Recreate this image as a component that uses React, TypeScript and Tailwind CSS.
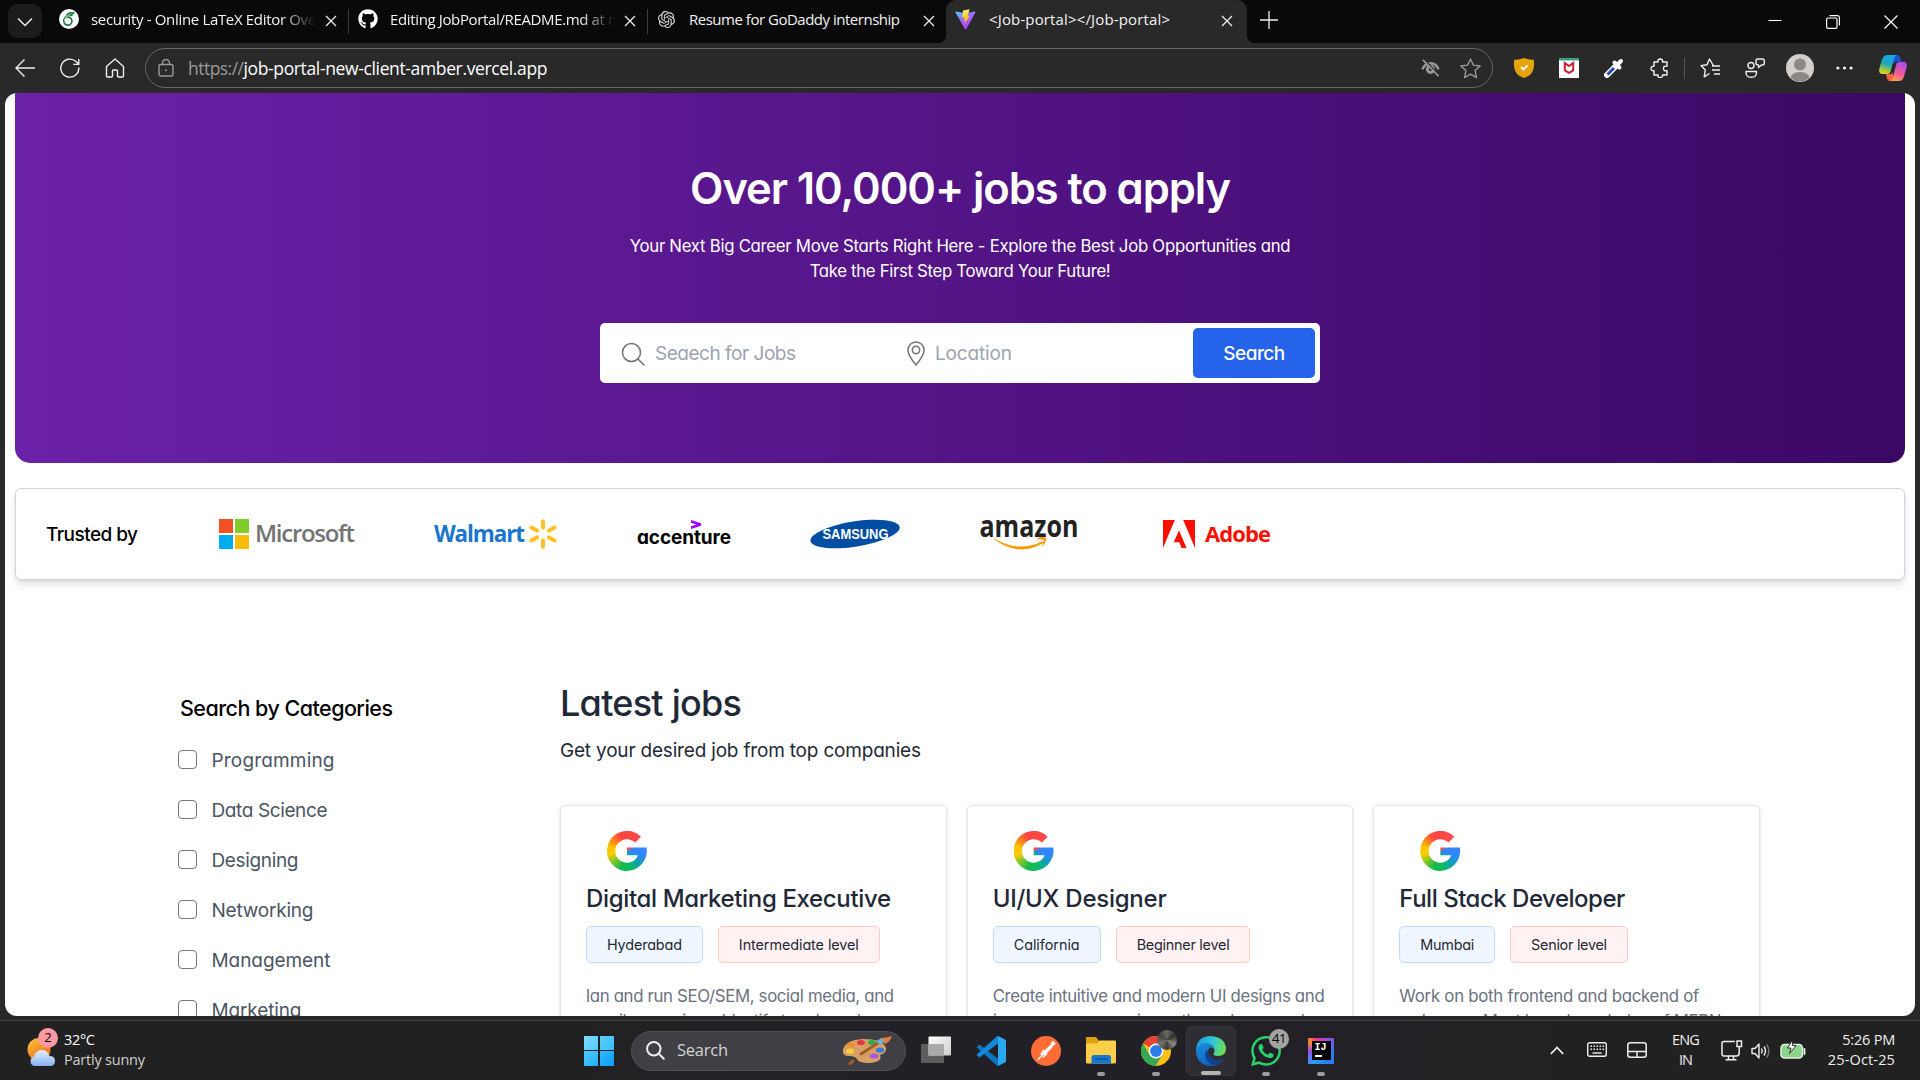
import { useLayoutEffect, useRef } from "react";
import type { ReactNode } from "react";
import { SiOpenai, SiOverleaf, SiWhatsapp } from "react-icons/si";
import { FaGithub } from "react-icons/fa";

/** Single-line text whose tracking is adjusted so that it spans `w` pixels. */
function Fit({ w, children, className = "" }: { w: number; children: string; className?: string }) {
  const ref = useRef<HTMLSpanElement>(null);
  useLayoutEffect(() => {
    const el = ref.current;
    if (!el) return;
    el.style.letterSpacing = "0px";
    const natural = el.getBoundingClientRect().width;
    el.style.letterSpacing = `${(w - natural) / Math.max(1, children.length - 1)}px`;
  }, [w, children]);
  return (
    <span ref={ref} className={`inline-block shrink-0 whitespace-pre ${className}`}>
      {children}
    </span>
  );
}

function Cross({ className = "" }: { className?: string }) {
  return (
    <svg viewBox="0 0 12 12" className={`size-[12px] shrink-0 ${className}`} stroke="#eee" strokeWidth="1.3" fill="none">
      <path d="M1 1L11 11M11 1L1 11" />
    </svg>
  );
}

function ViteLogo() {
  return (
    <svg viewBox="0 0 32 32" className="size-[21px] shrink-0">
      <defs>
        <linearGradient id="va" x1="0" y1="0" x2="0.6" y2="1">
          <stop offset="0" stopColor="#41d1ff" />
          <stop offset="0.5" stopColor="#9a6bff" />
          <stop offset="1" stopColor="#bd34fe" />
        </linearGradient>
        <linearGradient id="vb" x1="0.4" y1="0" x2="0.6" y2="1">
          <stop offset="0" stopColor="#ffea83" />
          <stop offset="0.3" stopColor="#ffdd35" />
          <stop offset="1" stopColor="#ffa800" />
        </linearGradient>
      </defs>
      <path fill="url(#va)" d="M31 5.6L17.2 30.5a1.2 1.2 0 0 1-2.1 0L1 5.6a1.2 1.2 0 0 1 1.3-1.7L16 6.3l13.7-2.4A1.2 1.2 0 0 1 31 5.6z" />
      <path fill="url(#vb)" d="M22.3.3L12.1 2.3l-.8 11.2 3.4-.6-.9 5.1 2.3-.6-1.5 6.4 7.6-13-3.3.7z" />
    </svg>
  );
}

function Tab({ icon, title, w, cut }: { icon: ReactNode; title: string; w: number; cut?: boolean }) {
  return (
    <div className="flex h-full w-[298px] items-center pb-[4px] pl-[8px]">
      <div className="flex w-[21px] items-center justify-center pb-px">{icon}</div>
      <div
        className={
          cut
            ? "ml-[12px] w-[225px] overflow-hidden pb-px [mask-image:linear-gradient(to_right,black_190px,transparent_225px)]"
            : "ml-[12px] w-[225px] overflow-hidden pb-px"
        }
      >
        <Fit w={w}>{title}</Fit>
      </div>
      <Cross className="ml-[9px] mt-[3px]" />
    </div>
  );
}

function TabStrip() {
  return (
    <div className="flex h-[43px] items-start bg-[#090909] text-[15px] text-[#f2f2f2]">
      <div className="ml-[8px] mr-[8px] mt-[4px] flex h-[34px] w-[34px] items-center justify-center rounded-[9px] bg-[#1c1c1c]">
        <svg viewBox="0 0 16 10" className="mt-[2px] w-[16px]" fill="none" stroke="#eee" strokeWidth="1.5">
          <path d="M1 1.5L8 8.5L15 1.5" />
        </svg>
      </div>
      <Tab
        cut
        w={231}
        title="security - Online LaTeX Editor Over"
        icon={
          <div className="flex size-[20px] items-center justify-center rounded-full bg-white">
            <SiOverleaf className="size-[14px] text-[#177a3e]" />
          </div>
        }
      />
      <div className="mt-[9px] h-[25px] w-px bg-[#3d3d3d]" />
      <Tab cut w={232} title="Editing JobPortal/README.md at m" icon={<FaGithub className="size-[20px] text-white" />} />
      <div className="mt-[9px] h-[25px] w-px bg-[#3d3d3d]" />
      <Tab w={211} title="Resume for GoDaddy internship" icon={<SiOpenai className="size-[17px] text-[#ddd]" />} />
      <div className="relative flex h-full w-[301px] items-center rounded-t-[10px] bg-[#292929] pb-[4px] pl-[9px] before:absolute before:-left-[8px] before:bottom-0 before:size-[8px] before:bg-[radial-gradient(circle_at_0_0,transparent_8px,#292929_8.5px)] after:absolute after:-right-[8px] after:bottom-0 after:size-[8px] after:bg-[radial-gradient(circle_at_100%_0,transparent_8px,#292929_8.5px)]">
        <ViteLogo />
        <div className="ml-[13px] w-[232px] pb-px">
          <Fit w={181}>{"<Job-portal></Job-portal>"}</Fit>
        </div>
        <Cross className="mt-[3px]" />
      </div>
      <svg viewBox="0 0 18 18" className="ml-[13px] mt-[11px] size-[18px]" stroke="#eee" strokeWidth="1.3">
        <path d="M9 0V18M0 9H18" />
      </svg>
      <div className="ml-auto mr-[22px] flex h-full items-center gap-[44px]">
        <svg viewBox="0 0 14 14" className="mt-[1px] size-[14px]" stroke="#fff" strokeWidth="1.1">
          <path d="M0.5 5.5H13.5" />
        </svg>
        <svg viewBox="0 0 14 14" className="size-[14px]" fill="none" stroke="#fff" strokeWidth="1.2">
          <rect x="0.6" y="3" width="10.4" height="10.4" rx="1.5" />
          <path d="M3.5 .7H11.5A2 2 0 0 1 13.4 2.6V10.6" />
        </svg>
        <svg viewBox="0 0 14 14" className="size-[14px]" stroke="#fff" strokeWidth="1.2">
          <path d="M.5.5L13.5 13.5M13.5.5L.5 13.5" />
        </svg>
      </div>
    </div>
  );
}

function CopilotLogo() {
  return (
    <svg viewBox="0 0 28 28" className="size-[28px]">
      <defs>
        <linearGradient id="cpa" x1="0.5" y1="0" x2="0.2" y2="1">
          <stop offset="0" stopColor="#12a5ea" />
          <stop offset="0.45" stopColor="#22a8b8" />
          <stop offset="0.75" stopColor="#8fc94a" />
          <stop offset="1" stopColor="#f5cf1b" />
        </linearGradient>
        <linearGradient id="cpb" x1="0.6" y1="0" x2="0.3" y2="1">
          <stop offset="0" stopColor="#a84cf0" />
          <stop offset="0.55" stopColor="#f0569a" />
          <stop offset="1" stopColor="#fba04f" />
        </linearGradient>
      </defs>
      <path fill="#1b52d6" d="M13 1H18Q20.5 1 21.3 4L22 7.5H18Q15.5 7.5 14.5 10Z" />
      <path fill="#f2603d" d="M7 20H11.5Q13 20 13.5 18L15 26Q14.5 27 12 27H10.5Q8.5 27 8 24.5Z" />
      <path fill="url(#cpa)" d="M8.5 1H18Q16 1.5 15.3 4L11.5 17.5Q10.8 20 8 20H4Q-1 20 .5 14L3 5.5Q4.5 1 8.5 1Z" />
      <path fill="url(#cpb)" d="M20 27H11Q13 26.5 13.7 24L17.3 10.5Q18 7.8 21 7.8H24.3Q29 8 27.6 13.5L25 22.5Q23.8 27 20 27Z" />
    </svg>
  );
}

function Toolbar() {
  return (
    <div className="flex h-[50px] items-center bg-[#292929] text-[#eee]">
      <svg viewBox="0 0 20 20" className="ml-[15px] size-[20px]" fill="none" stroke="currentColor" strokeWidth="1.4">
        <path d="M20 10H1M9.500 1.500L1 10L9.500 18.500" />
      </svg>
      <svg viewBox="0 0 20 20" className="ml-[25px] size-[20px]" fill="none" stroke="currentColor" strokeWidth="1.4">
        <path d="M18.800 9.500A9 9 0 1 1 16 3.600L18.500 6M18.800 1V6.400H13.300" />
      </svg>
      <svg viewBox="0 0 20 20" className="ml-[25px] size-[20px]" fill="none" stroke="currentColor" strokeWidth="1.4" strokeLinejoin="round">
        <path d="M1.500 8.500L10 1L18.500 8.500V18Q18.500 19 17.500 19H13.500Q12.500 19 12.500 18V13Q12.500 12 11.500 12H8.500Q7.500 12 7.500 13V18Q7.500 19 6.500 19H2.500Q1.500 19 1.500 18Z" />
      </svg>
      <div className="ml-[20px] flex h-[40px] w-[1348px] items-center rounded-full border border-[#686868] text-[#999]">
        <svg viewBox="0 0 16 18" className="ml-[12px] h-[18px] w-[16px]" fill="none" stroke="currentColor" strokeWidth="1.4">
          <rect x="1" y="5.500" width="14" height="11.500" rx="2" />
          <path d="M4.500 5.500V4A3.500 3.500 0 0 1 11.500 4V5.500" />
          <circle cx="8" cy="11.300" r="1" fill="currentColor" stroke="none" />
        </svg>
        <div className="ml-[14px] flex text-[17.500px] leading-[38px]">
          <Fit w={56} className="pb-[1px] text-[#9a9a9a]">https://</Fit>
          <Fit w={304} className="pb-[1px] text-white">job-portal-new-client-amber.vercel.app</Fit>
        </div>
        <svg viewBox="0 0 20 18" className="ml-auto mr-[20px] h-[18px] w-[19px]" fill="none" stroke="currentColor">
          <path strokeWidth="2.600" d="M1.500 10.500Q4 4 10 4Q16 4 18.500 10.500" />
          <circle cx="10" cy="10.300" r="3.400" strokeWidth="3" />
          <path d="M3 0L19.500 17" stroke="#292929" strokeWidth="2" />
          <path d="M2 0.500L18.500 17.500" strokeWidth="1.700" />
        </svg>
        <svg viewBox="0 0 20 20" className="mr-[11px] size-[21px]" fill="none" stroke="currentColor" strokeWidth="1.300" strokeLinejoin="round">
          <path d="M10 1L12.700 6.800L19.200 7.600L14.400 12L15.700 18.600L10 15.400L4.300 18.600L5.600 12L.8 7.600L7.300 6.800Z" />
        </svg>
      </div>
      <svg viewBox="0 0 20 20" className="ml-[21px] size-[20px]">
        <path d="M0 2Q6 1.500 10 0Q14 1.500 20 2V8Q19.500 17 10 20Q.5 17 0 8Z" fill="#e5a50a" />
        <path d="M7 9L9.500 11.500L13.500 7.500" fill="none" stroke="#fff" strokeWidth="1.800" />
      </svg>
      <svg viewBox="0 0 20 20" className="ml-[25px] size-[20px]">
        <path fill="#fff" d="M0 0H20V20H0Z" />
        <path fill="#3a9c86" d="M0 0H20V2.500H0Z" />
        <path fill="none" stroke="#c8202f" strokeWidth="2" d="M5.800 5V12.500L10 14.800L14.200 12.500V5L10 8Z" />
      </svg>
      <svg viewBox="0 0 20 20" className="ml-[25px] size-[20px]" fill="none">
        <path d="M3 17L12 8" stroke="#fff" strokeWidth="6" strokeLinecap="round" />
        <path d="M3.500 16.500L10 10" stroke="#2948b8" strokeWidth="3" />
        <path d="M10.500 4.500L15.500 9.500M13 7L17 3" stroke="#fff" strokeWidth="4" strokeLinecap="round" />
      </svg>
      <svg viewBox="0 0 20 20" className="ml-[25px] size-[20px]" fill="none" stroke="currentColor" strokeWidth="1.400" strokeLinejoin="round">
        <path d="M5 4H9Q8.500 1 11.200 1Q14 1 13.500 4H18V8.300Q14.500 7.500 14.500 10.500Q14.500 13.500 18 12.600V17H13.500Q14 19.500 11.200 19.500Q8.500 19.500 9 17H5V12.700Q2 13 2 10.500Q2 8 5 8.300Z" />
      </svg>
      <div className="ml-[15px] h-[21px] w-px bg-[#555]" />
      <svg viewBox="0 0 20 20" className="ml-[15px] size-[20px]" fill="none" stroke="currentColor" strokeWidth="1.400" strokeLinejoin="round">
        <path d="M12 7H13L9.500 1L7 6.800L1 7.600L5.300 12L4.200 18.800L9.500 15.500M12 8H20M12 12H20M14 16H20" />
      </svg>
      <svg viewBox="0 0 20 20" className="ml-[25px] size-[20px]" fill="none" stroke="currentColor" strokeWidth="1.400" strokeLinejoin="round">
        <circle cx="6" cy="7.500" r="3" />
        <path d="M1 13.500H11.500Q12 19.300 6.200 19.300Q.5 19.300 1 13.500ZM12.500 1H17.500Q19.300 1 19.300 3V5Q19.300 7 17.500 7H16.500L13.500 9.500V7Q11 7 11 5V3Q11 1 12.500 1Z" />
      </svg>
      <svg viewBox="0 0 28 28" className="ml-[21px] size-[28px]">
        <circle cx="14" cy="14" r="14" fill="#d2cfcc" />
        <circle cx="14" cy="10.500" r="6" fill="#8c8884" />
        <path d="M4.500 23Q7 18 14 18Q21 18 23.500 23Q19.500 27.500 14 27.500Q8.500 27.500 4.500 23Z" fill="#8c8884" />
      </svg>
      <svg viewBox="0 0 18 4" className="ml-[22px] h-[4px] w-[17px]" fill="#eee">
        <circle cx="2" cy="2" r="1.700" />
        <circle cx="9" cy="2" r="1.700" />
        <circle cx="16" cy="2" r="1.700" />
      </svg>
      <div className="ml-[26px]">
        <CopilotLogo />
      </div>
    </div>
  );
}

function Hero() {
  return (
    <div className="mx-[10px] flex h-[370px] flex-col items-center rounded-b-[15px] bg-[linear-gradient(to_right,#6b21a8,#3b0764)] pt-[70px] text-white">
      <h2 className="text-[43.5px] font-[560] leading-[50px]">
        <Fit w={541}>Over 10,000+ jobs to apply</Fit>
      </h2>
      <p className="mt-[21px] flex flex-col items-center text-[16.8px] leading-[25px]">
        <Fit w={661}>Your Next Big Career Move Starts Right Here - Explore the Best Job Opportunities and</Fit>
        <Fit w={301}>Take the First Step Toward Your Future!</Fit>
      </p>
      <div className="mt-[39px] flex h-[60px] w-[720px] items-center rounded-[5px] bg-white pr-[5px] text-[19px] leading-[30px] text-[#9ca3af]">
        <div className="flex w-[307px] items-center pl-[21px]">
          <svg viewBox="0 0 24 24" className="mt-[1px] size-[24px]" fill="none" stroke="#737373" strokeWidth="1.500" strokeLinecap="round">
            <circle cx="10.500" cy="10.500" r="9" />
            <path d="M17 17L23 23" />
          </svg>
          <Fit w={141} className="ml-[10px] pt-[2px]">Seaech for Jobs</Fit>
        </div>
        <svg viewBox="0 0 18 25" className="h-[25px] w-[18px]" fill="none" stroke="#737373" strokeWidth="1.500">
          <path d="M9 24Q1 14.500 1 9A8 8 0 0 1 17 9Q17 14.500 9 24Z" />
          <circle cx="9" cy="9" r="3.700" />
        </svg>
        <Fit w={77} className="ml-[10px] pt-[2px]">Location</Fit>
        <div className="ml-auto flex h-[50px] w-[122px] items-center justify-center rounded-[5px] bg-[#2563eb] font-medium text-white">
          <Fit w={62} className="pt-[2px]">Search</Fit>
        </div>
      </div>
    </div>
  );
}

function Trusted() {
  return (
    <div className="mx-[10px] mt-[25px] flex h-[92px] items-center rounded-[6px] border border-[#d1d5db] bg-white pl-[30px] shadow-[0_5px_8px_-1px_rgba(0,0,0,0.12),0_2px_5px_-2px_rgba(0,0,0,0.12)]">
      <div className="w-[173px] text-[19px] font-medium leading-[30px] text-black">
        <Fit w={92} className="pt-px">Trusted by</Fit>
      </div>
      <div className="flex w-[215px] items-center">
        <div className="grid size-[30px] grid-cols-2 gap-[1.500px]">
          <div className="bg-[#f25022]" />
          <div className="bg-[#80cc28]" />
          <div className="bg-[#00adef]" />
          <div className="bg-[#fbbc09]" />
        </div>
        <Fit w={100} className="ml-[6px] mt-[-3px] font-['Open_Sans'] text-[24px] font-semibold leading-[30px] text-[#737373]">Microsoft</Fit>
      </div>
      <div className="flex w-[203px] items-center">
        <Fit w={91} className="mr-[5px] mt-[-1px] font-['Open_Sans'] text-[22.500px] font-bold leading-[30px] text-[#1a75cf]">Walmart</Fit>
        <svg viewBox="0 0 28 30" className="h-[30px] w-[28px]" stroke="#ffc120" strokeWidth="4" strokeLinecap="round">
          <path d="M14 2.200V8.500M14 27.800V21.500M2.500 8.500L8 11.600M25.500 8.500L20 11.600M2.500 21.500L8 18.400M25.500 21.500L20 18.400" />
        </svg>
      </div>
      <div className="relative w-[173px]">
        <Fit w={94} className="mt-[7px] text-[19px] font-bold leading-[26px] text-black">accenture</Fit>
        <svg viewBox="0 0 10 9" className="absolute left-[54px] top-[2px] h-[9px] w-[10px]">
          <path d="M0 0L10 3.200V5.800L0 9V6.200L5.500 4.500L0 2.800Z" fill="#a100ff" />
        </svg>
      </div>
      <svg viewBox="0 0 90 30" className="mr-[80px] h-[30px] w-[90px] overflow-visible">
        <ellipse cx="45" cy="15" rx="45.300" ry="12.600" transform="rotate(-9 45 15)" fill="#034ea2" />
        <text x="12.500" y="19.800" textLength="66" lengthAdjust="spacingAndGlyphs" fill="#fff" fontFamily="Liberation Sans" fontWeight="700" fontSize="14.500">SAMSUNG</text>
      </svg>
      <svg viewBox="0 0 100 34" className="mr-[83px] h-[34px] w-[100px] overflow-visible">
        <text x="-0.500" y="19.500" textLength="99" lengthAdjust="spacingAndGlyphs" fill="#222" fontFamily="Open Sans" fontWeight="700" fontSize="30">amazon</text>
        <path d="M14.500 21.500Q38 36 62 24.500Q64 24.500 62.500 26.500Q38 40 14.500 22.500Z" fill="#ff9900" />
        <path d="M57 21.500Q62 19 66 21Q66.500 25 62.500 29.500Q62 29 64 23Q61 22 57 22.500Z" fill="#ff9900" />
      </svg>
      <svg viewBox="0 0 32 28" className="h-[28px] w-[32px]" fill="#fa0f00">
        <path d="M0 0H11.800L0 28ZM20.200 0H32V28ZM16 10.200L23.500 28H18.600L16.300 22.300H10.800Z" />
      </svg>
      <Fit w={66} className="mb-[2px] ml-[10px] font-['Open_Sans'] text-[22px] font-bold leading-[30px] text-[#fa0f00]">Adobe</Fit>
    </div>
  );
}

const categories: [string, number][] = [
  ["Programming", 123],
  ["Data Science", 116],
  ["Designing", 87],
  ["Networking", 102],
  ["Management", 119],
  ["Marketing", 90],
];

type Job = {
  title: [string, number];
  place: [string, number];
  level: [string, number];
  lines: [string, number][];
};

const jobs: Job[] = [
  {
    title: ["Digital Marketing Executive", 305],
    place: ["Hyderabad", 75],
    level: ["Intermediate level", 120],
    lines: [["lan and run SEO/SEM, social media, and", 308], ["email campaigns. Identify trends and", 275]],
  },
  {
    title: ["UI/UX Designer", 174],
    place: ["California", 66],
    level: ["Beginner level", 93],
    lines: [["Create intuitive and modern UI designs and", 332], ["improve user experience through research", 318]],
  },
  {
    title: ["Full Stack Developer", 226],
    place: ["Mumbai", 54],
    level: ["Senior level", 76],
    lines: [["Work on both frontend and backend of", 300], ["web apps. Must have knowledge of MERN", 322]],
  },
];

function JobCard({ job }: { job: Job }) {
  return (
    <div className="h-[300px] rounded-[5px] border border-[#e5e7eb] bg-white p-[25px] shadow-[0_1px_4px_rgba(0,0,0,0.12)]">
      <div className="ml-[21px] h-[40px] w-[40px] bg-[conic-gradient(#ff4641_0deg,#ff4a50_45deg,#2f86ff_75deg,#2f86ff_105deg,#08a5a8_140deg,#0ebc5f_170deg,#14bb4a_200deg,#8ac926_235deg,#ffcc00_260deg,#ffc400_285deg,#ff8a1c_305deg,#ff4641_335deg)] [clip-path:path('M34_5.7A20_20_0_1_0_39.6_16.5H20V24.3H31A11.8_11.8_0_1_1_28.2_11.5Z')]" />
      <h4 className="mt-[10px] text-[24px] font-medium leading-[35px]">
        <Fit w={job.title[1]}>{job.title[0]}</Fit>
      </h4>
      <div className="mt-[10px] flex gap-[15px] text-[14.400px] leading-[20px]">
        <span className="h-[37px] rounded-[5px] border border-[#bfdbfe] bg-[#eff6ff] px-[20px] py-[8px]">
          <Fit w={job.place[1]}>{job.place[0]}</Fit>
        </span>
        <span className="h-[37px] rounded-[5px] border border-[#fecaca] bg-[#fef2f2] px-[20px] py-[8px]">
          <Fit w={job.level[1]}>{job.level[0]}</Fit>
        </span>
      </div>
      <p className="mt-[21px] flex flex-col items-start text-[16.800px] leading-[25px] text-[#6b7280]">
        {job.lines.map(([text, w]) => (
          <Fit key={text} w={w}>{text}</Fit>
        ))}
      </p>
    </div>
  );
}

function Page() {
  return (
    <div className="mx-[5px] h-[923px] overflow-hidden rounded-[12px] bg-white font-['Inter',sans-serif] [font-feature-settings:'cv11'_1]">
      <Hero />
      <Trusted />
      <div className="flex pl-[173px] pr-[155px] pt-[101px] text-[#1f2937]">
        <aside className="w-[382px] pt-[10px]">
          <h4 className="pl-[2px] text-[21.500px] font-medium leading-[35px] text-black">
            <Fit w={213}>Search by Categories</Fit>
          </h4>
          <ul className="mt-[18px] flex flex-col gap-[20px] text-[19px] leading-[30px] text-[#4b5563]">
            {categories.map(([name, w]) => (
              <li key={name} className="flex h-[30px] items-center">
                <span className="size-[19px] rounded-[4px] border-[1.500px] border-[#767676] bg-white" />
                <Fit w={w} className="ml-[14.500px] pt-[3px]">{name}</Fit>
              </li>
            ))}
          </ul>
        </aside>
        <section className="flex-1">
          <h3 className="text-[36px] font-medium leading-[45px]">
            <Fit w={182}>Latest jobs</Fit>
          </h3>
          <p className="mt-[10px] text-[19px] leading-[30px]">
            <Fit w={361}>Get your desired job from top companies</Fit>
          </p>
          <div className="mt-[39px] grid grid-cols-3 gap-[20px]">
            {jobs.map((job) => (
              <JobCard key={job.title[0]} job={job} />
            ))}
          </div>
        </section>
      </div>
    </div>
  );
}

function DockItem({ children, run, active }: { children: ReactNode; run?: boolean; active?: boolean }) {
  return (
    <div
      className={
        active
          ? "relative flex size-[50px] items-center justify-center rounded-[6px] border border-[#38373e] bg-[#2e2d34]"
          : "relative flex size-[50px] items-center justify-center"
      }
    >
      {children}
      {run && <span className="absolute bottom-0 h-[4px] w-[8px] rounded-full bg-[#9b9a9c]" />}
      {active && <span className="absolute bottom-0 h-[4px] w-[20px] rounded-full bg-[#b5b3b2]" />}
    </div>
  );
}

function Palette() {
  return (
    <svg viewBox="0 0 52 30" className="h-[30px] w-[52px]">
      <path d="M2 14Q4 4 22 3Q42 3 45 12Q46 17 39 19Q42 26 28 27Q17 27 16 23Q14 20 8 20Q1 20 2 14Z" fill="#d9a066" />
      <ellipse cx="10" cy="9" rx="4" ry="2.600" fill="#f28c28" />
      <ellipse cx="20" cy="6.500" rx="4" ry="2.600" fill="#e0393e" />
      <ellipse cx="31" cy="6.500" rx="4" ry="2.600" fill="#2fa84f" />
      <ellipse cx="9" cy="15" rx="4" ry="2.600" fill="#f6d03c" />
      <ellipse cx="39" cy="14" rx="4.200" ry="2.600" fill="#2f7fd6" />
      <ellipse cx="33" cy="20" rx="4.500" ry="2.600" fill="#a95be0" />
      <path d="M9 27.500L12 25M20 18L37 7" stroke="#a85a28" strokeWidth="3" strokeLinecap="round" />
      <path d="M37 7L42 4" stroke="#67b4dc" strokeWidth="5" />
      <path d="M40 2Q45 2 51 0Q49 6 44 8Z" fill="#e08040" />
    </svg>
  );
}

function Taskbar() {
  return (
    <div className="flex h-[60px] items-center border-t border-[#414143] bg-[linear-gradient(to_right,#212121,#212121_28%,#222027_45%,#222027_62%,#212121_85%)] text-[14.500px] text-white">
      <div className="relative ml-[27px] size-[30px]">
        <svg viewBox="0 0 30 30" className="mt-[1px] size-[30px]">
          <defs>
            <linearGradient id="sun" x1="0" y1="0" x2="0.600" y2="1">
              <stop offset="0" stopColor="#fbc43b" />
              <stop offset="1" stopColor="#f0701e" />
            </linearGradient>
            <linearGradient id="cloud" x1="0" y1="0" x2="0" y2="1">
              <stop offset="0" stopColor="#e6f0ff" />
              <stop offset="1" stopColor="#85b1f2" />
            </linearGradient>
          </defs>
          <circle cx="12" cy="12.500" r="11.500" fill="url(#sun)" />
          <path d="M7 29A5 5 0 0 1 7 19.500Q9 13 15 13Q20.500 13 22.500 19Q28 19 28 24Q28 29 23 29Z" fill="url(#cloud)" />
        </svg>
        <span className="absolute left-[11px] top-[-8px] flex size-[20px] items-center justify-center rounded-full bg-[#ff99a4] text-[13px] text-black">2</span>
      </div>
      <div className="ml-[7px] flex w-[90px] flex-col items-start pb-[2px] leading-[20px]">
        <Fit w={31}>32°C</Fit>
        <Fit w={81} className="text-[#d0d0d0]">Partly sunny</Fit>
      </div>
      <div className="ml-[430px] grid size-[30px] grid-cols-2 gap-[1.500px]">
        <div className="bg-[linear-gradient(135deg,#7fdcfd,#4fc8fa)]" />
        <div className="bg-[linear-gradient(135deg,#5fd0fb,#35bdf9)]" />
        <div className="bg-[linear-gradient(135deg,#4fcafb,#1fb0f8)]" />
        <div className="bg-[linear-gradient(135deg,#35b8fa,#0a9cf5)]" />
      </div>
      <div className="ml-[17px] flex h-[40px] w-[275px] items-center rounded-full border border-[#515057] bg-[#403f45] pl-[14px] pr-[12px]">
        <svg viewBox="0 0 19 19" className="size-[19px]" fill="none" stroke="#eee" strokeWidth="2" strokeLinecap="round">
          <circle cx="7.800" cy="7.800" r="6.700" />
          <path d="M12.800 12.800L17.800 17.800" />
        </svg>
        <Fit w={51} className="ml-[12px] text-[16.500px] text-[#d4d4d4]">Search</Fit>
        <div className="ml-auto">
          <Palette />
        </div>
      </div>
      <div className="ml-[5px] flex gap-[5px]">
        <DockItem>
          <svg viewBox="0 0 30 28" className="mb-[2px] h-[28px] w-[30px]">
            <defs>
              <linearGradient id="tv" x1="0" y1="0" x2="1" y2="1">
                <stop offset="0" stopColor="#fff" />
                <stop offset="1" stopColor="#ccc" />
              </linearGradient>
            </defs>
            <rect x="0" y="8" width="23" height="19" rx="1" fill="#5d5d5f" />
            <rect x="7.500" y="0.500" width="22.500" height="19" rx="1" fill="url(#tv)" />
            <rect x="7.500" y="8" width="15.500" height="11.500" fill="#aaa" />
          </svg>
        </DockItem>
        <DockItem>
          <svg viewBox="0 0 30 30" className="size-[30px]">
            <path d="M22 0L29 3.500Q30 4 30 5V25Q30 26 29 26.500L22 30Z" fill="#29a9f0" />
            <path d="M1 10.500L3.500 8.500L22 22.500V30Q21 30 20.500 29.200L.8 11.500Q.5 11 1 10.500Z" fill="#0b76c2" />
            <path d="M1 19.500L3.500 21.500L22 7.500V0Q21 0 20.500.8L.8 18.500Q.5 19 1 19.500Z" fill="#1389d8" />
          </svg>
        </DockItem>
        <DockItem>
          <div className="flex size-[30px] items-center justify-center rounded-full bg-[#ff6c37]">
            <svg viewBox="0 0 30 30" className="size-[30px]" fill="none" stroke="#fff" strokeLinecap="round">
              <circle cx="22" cy="7.500" r="1.800" fill="#fff" />
              <path d="M20 10.500L13 17.500" strokeWidth="3.200" />
              <path d="M12 18L7 23.500M13 14L10 18M16 18L12 21" strokeWidth="1.300" />
            </svg>
          </div>
        </DockItem>
        <DockItem run>
          <svg viewBox="0 0 30 27" className="h-[27px] w-[30px]">
            <path d="M0 1Q0 0 1 0H10L13 4V8H0Z" fill="#dda012" />
            <path d="M0 6.500H11L13.500 3.500H29Q30 3.500 30 4.500V25Q30 26.500 28.500 26.500H1.500Q0 26.500 0 25Z" fill="#fdce4a" />
            <path d="M5.500 26.500V20.500Q5.500 18 8 18H22.500Q25 18 25 20.500V26.500Z" fill="#1277cf" />
            <path d="M9 22H22" stroke="#0a4d94" strokeWidth="1.300" />
          </svg>
        </DockItem>
        <DockItem run>
          <svg viewBox="0 0 30 30" className="size-[30px]">
            <circle cx="15" cy="15" r="15" fill="#fbc116" />
            <path d="M15 15L2 7.500A15 15 0 0 1 28 7.500H15Z" fill="#ea4335" />
            <path d="M15 7.500H28L15 7.500A7.500 7.500 0 0 0 8.500 18.700L2 7.500A15 15 0 0 0 14.500 30L21.500 18.700L15 22.500L8.500 18.700Z" fill="#34a853" />
            <circle cx="15" cy="15" r="7.500" fill="#fff" />
            <circle cx="15" cy="15" r="5.900" fill="#2b7de9" />
          </svg>
          <span className="absolute right-[4px] top-[4px] size-[20px] rounded-full bg-[conic-gradient(#6a6a64,#2f2f2e_60deg,#8a8a80_120deg,#3a3c38_180deg,#77756b_240deg,#444_300deg,#6a6a64)]" />
        </DockItem>
        <DockItem active>
          <svg viewBox="0 0 30 30" className="size-[30px]">
            <defs>
              <linearGradient id="ea" x1="0" y1="0.300" x2="1" y2="0.500">
                <stop offset="0" stopColor="#1b9de2" />
                <stop offset="0.550" stopColor="#34c6d4" />
                <stop offset="1" stopColor="#6be04a" />
              </linearGradient>
              <linearGradient id="eb" x1="0" y1="0" x2="0.600" y2="1">
                <stop offset="0" stopColor="#1b8fe0" />
                <stop offset="1" stopColor="#0f5cb5" />
              </linearGradient>
            </defs>
            <path d="M0 14Q1 0 15 0Q29 1 30 12.500Q30 20 22 20Q17 20 17.500 17.500Q19.500 15 17.500 12Q12 5.500 0 14Z" fill="url(#ea)" />
            <path d="M0 14Q3 6.500 11 7Q17 8 18.500 13Q15 10 12.500 13.500Q9 20 15 24Q21 28 27.500 23Q23 30 15 30Q0 29 0 14Z" fill="url(#eb)" />
            <path d="M12.500 13.500Q7 17 10.500 23.500Q14 29.500 20 29Q25 27 27.700 22.500Q20 26 15.500 22Q11 18 12.500 13.500Z" fill="#0c428f" />
          </svg>
        </DockItem>
        <DockItem run>
          <SiWhatsapp className="size-[30px] text-[#25d366]" />
          <span className="absolute right-[2px] top-[3px] flex size-[20px] items-center justify-center rounded-full bg-[#a5a3a1] text-[13px] tracking-[-0.500px] text-black">41</span>
        </DockItem>
        <DockItem run>
          <div className="flex size-[26px] items-center justify-center bg-[conic-gradient(#c63bd0,#2a7bf0_90deg,#2a7bf0_150deg,#21a3f5_210deg,#9a4df0_270deg,#fc8a2a_310deg,#f5317f_340deg,#c63bd0)]">
            <div className="flex size-[19px] flex-col bg-black pl-[3px] pt-[1px] font-['Liberation_Mono'] text-[10px] font-bold leading-[11px] text-white">
              IJ
              <span className="mt-[2px] h-[1.500px] w-[7px] bg-white" />
            </div>
          </div>
        </DockItem>
      </div>
      <div className="ml-auto mr-[25px] flex items-center text-[#eee]">
        <svg viewBox="0 0 14 9" className="h-[9px] w-[14px]" fill="none" stroke="currentColor" strokeWidth="1.800">
          <path d="M.8 8L7 1.500L13.200 8" />
        </svg>
        <svg viewBox="0 0 20 15" className="ml-[23px] mb-[2px] h-[15px] w-[20px]" fill="none" stroke="currentColor" strokeWidth="1.400">
          <rect x=".7" y=".7" width="18.600" height="13.600" rx="2" />
          <path d="M3.500 4.200H17M3.500 7.300H17" strokeDasharray="1.500 1.500" />
          <path d="M5.500 11H14.500" />
        </svg>
        <svg viewBox="0 0 20 16" className="ml-[20px] mb-px h-[16px] w-[20px]" fill="none" stroke="currentColor" strokeWidth="1.500">
          <rect x=".8" y=".8" width="18.400" height="14.400" rx="2.500" />
          <path d="M1 9.500H19M10 9.500V15" />
        </svg>
        <div className="ml-[24px] flex w-[29px] flex-col items-center pb-px leading-[20px]">
          <Fit w={28}>ENG</Fit>
          <Fit w={14}>IN</Fit>
        </div>
        <svg viewBox="0 0 22 21" className="ml-[21px] mb-px h-[21px] w-[22px]" fill="none" stroke="currentColor" strokeWidth="1.500">
          <path d="M14 1.500H3Q1 1.500 1 3.500V14Q1 16 3 16H16M7.500 16V19.500M12.500 16V19.500M4.500 19.700H15.500" />
          <path d="M16 1H20.500V6.500H16ZM18.200 6.500V13Q18.200 15.500 16 16" />
        </svg>
        <svg viewBox="0 0 20 18" className="ml-[8px] h-[18px] w-[20px]" fill="none" stroke="currentColor" strokeWidth="1.400" strokeLinejoin="round">
          <path d="M1 6.500H4L8 2V16L4 11.500H1ZM10.500 6.500Q12 9 10.500 11.500" />
          <path d="M13 4.500Q16 9 13 13.500" />
          <path d="M15.800 2.500Q20 9 15.800 15.500" stroke="#777" />
        </svg>
        <svg viewBox="0 0 26 20" className="ml-[9px] mb-[2px] h-[20px] w-[26px]">
          <rect x="1" y="4.500" width="21.500" height="13.500" rx="3.500" fill="#8bd48b" stroke="#e4f4e4" strokeWidth="1.500" />
          <path d="M24.500 9V14" stroke="#e4f4e4" strokeWidth="1.800" strokeLinecap="round" />
          <path d="M12.500 0L7.500 8H11L9.500 13.500L16 5.500H12.500Z" fill="#fff" stroke="#222" strokeWidth=".9" />
        </svg>
        <div className="ml-[22px] flex w-[67px] flex-col items-end pb-[2px] leading-[20px]">
          <Fit w={53}>5:26 PM</Fit>
          <Fit w={67}>25-Oct-25</Fit>
        </div>
      </div>
    </div>
  );
}

export default function App() {
  return (
    <div className="h-[1080px] w-[1920px] overflow-hidden bg-[#292929] font-['Open_Sans',sans-serif]">
      <TabStrip />
      <Toolbar />
      <Page />
      <div className="h-[4px]" />
      <Taskbar />
    </div>
  );
}
